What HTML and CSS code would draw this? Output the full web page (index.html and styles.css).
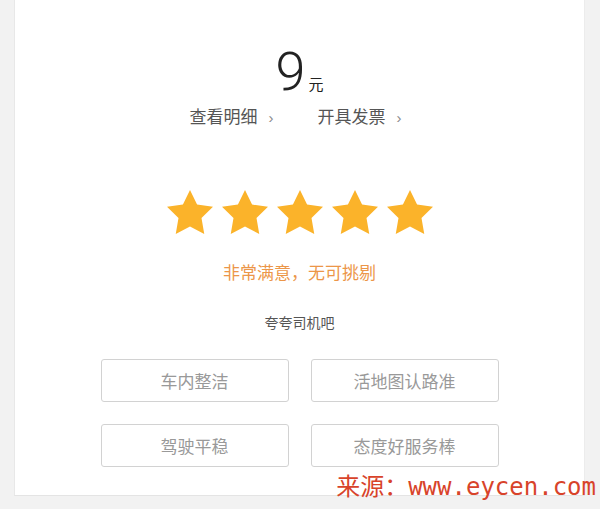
FILE: index.html
```html
<!DOCTYPE html>
<html lang="zh-CN">
<head>
    <meta charset="UTF-8">
    <meta name="viewport" content="width=device-width, initial-scale=1.0">
    <title>行程评价</title>
    <link rel="stylesheet" href="styles.css">
</head>
<body>

<div class="page">
    <div class="card">
        <div class="amount">
            <span class="amount-num">9</span><span class="amount-unit">元</span>
        </div>
        <div class="links">
            <a class="link" href="#">查看明细<span class="chevron">›</span></a>
            <a class="link" href="#">开具发票<span class="chevron">›</span></a>
        </div>

        <div class="stars">
            <svg class="star" viewBox="1.6 1.6 20.8 19.9"><path d="M12 1.6l3.2 6.6 7.2 1-5.2 5.1 1.25 7.2L12 18.1l-6.45 3.4 1.25-7.2-5.2-5.1 7.2-1z"/></svg>
            <svg class="star" viewBox="1.6 1.6 20.8 19.9"><path d="M12 1.6l3.2 6.6 7.2 1-5.2 5.1 1.25 7.2L12 18.1l-6.45 3.4 1.25-7.2-5.2-5.1 7.2-1z"/></svg>
            <svg class="star" viewBox="1.6 1.6 20.8 19.9"><path d="M12 1.6l3.2 6.6 7.2 1-5.2 5.1 1.25 7.2L12 18.1l-6.45 3.4 1.25-7.2-5.2-5.1 7.2-1z"/></svg>
            <svg class="star" viewBox="1.6 1.6 20.8 19.9"><path d="M12 1.6l3.2 6.6 7.2 1-5.2 5.1 1.25 7.2L12 18.1l-6.45 3.4 1.25-7.2-5.2-5.1 7.2-1z"/></svg>
            <svg class="star" viewBox="1.6 1.6 20.8 19.9"><path d="M12 1.6l3.2 6.6 7.2 1-5.2 5.1 1.25 7.2L12 18.1l-6.45 3.4 1.25-7.2-5.2-5.1 7.2-1z"/></svg>
        </div>
        <div class="rating-text">非常满意，无可挑剔</div>

        <div class="praise-title">夸夸司机吧</div>
        <div class="tags">
            <button class="tag">车内整洁</button>
            <button class="tag">活地图认路准</button>
            <button class="tag">驾驶平稳</button>
            <button class="tag">态度好服务棒</button>
        </div>
    </div>
    <div class="watermark">来源：www.eycen.com</div>
</div>

</body>
</html>
```

FILE: styles.css
```css
body {
    margin: 0;
    padding: 0;
    background-color: #f2f2f2;
    font-family: "Noto Sans CJK SC", "Noto Sans", sans-serif;
}
.page {
    position: relative;
    height: 509px;
    overflow: hidden;
}
.card {
    box-sizing: border-box;
    margin-left: 14px;
    width: 571px;
    height: 496px;
    background-color: #fff;
    border-left: 1px solid #e8e8e8;
    border-right: 1px solid #ececec;
    border-bottom: 1px solid #e4e4e4;
    padding-top: 45px;
    display: flex;
    flex-direction: column;
    align-items: center;
}
.amount {
    display: flex;
    align-items: baseline;
    line-height: 1;
    color: #222;
}
.amount-num {
    font-family: Roboto, "Liberation Sans", sans-serif;
    font-weight: 300;
    font-size: 54px;
}
.amount-unit {
    font-size: 15px;
    margin-left: 3px;
}
.links {
    display: flex;
    gap: 44px;
    margin-top: 2px;
    margin-left: -8px;
}
.link {
    color: #555;
    font-size: 17px;
    text-decoration: none;
    line-height: 30px;
}
.chevron {
    color: #888;
    font-family: "Liberation Sans", sans-serif;
    font-size: 15px;
    margin-left: 11px;
}
.stars {
    display: flex;
    gap: 9px;
    margin-top: 57px;
}
.star {
    width: 46px;
    height: 44px;
    fill: #fbb32a;
}
.rating-text {
    margin-top: 26px;
    color: #ec9648;
    font-size: 17px;
    line-height: 24px;
}
.praise-title {
    margin-top: 28px;
    color: #555;
    font-size: 14px;
    line-height: 20px;
}
.tags {
    display: grid;
    grid-template-columns: 188px 188px;
    gap: 22px;
    margin-top: 27px;
}
.tag {
    height: 43px;
    background: #fff;
    border: 1px solid #d2d2d2;
    border-radius: 3px;
    color: #999;
    font-family: "Noto Sans CJK SC", sans-serif;
    font-size: 17px;
    padding: 0;
}
.watermark {
    position: absolute;
    right: 4px;
    top: 470px;
    color: #d8432a;
    font-family: "DejaVu Sans Mono", "Noto Sans CJK SC", monospace;
    font-size: 24px;
    line-height: 34px;
    letter-spacing: 0;
}
```
